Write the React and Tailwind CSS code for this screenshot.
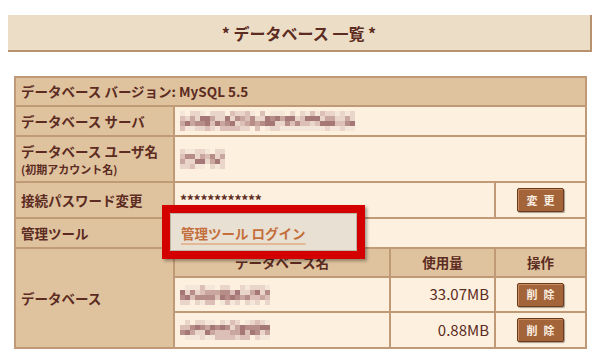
const FONT = { fontFamily: '"Noto Sans CJK JP", "Noto Sans", sans-serif' };

const cell = "border-2 border-[#c09a77] align-middle";
const th = `${cell} bg-[#dfc39e] px-[5px] font-bold`;
const td = `${cell} bg-[#fdf0de] px-[5px]`;

const SHADES = ["#f5e6da", "#ead5ca", "#dcc0b7", "#caa6a0", "#b78d89", "#a57877"];

// pixelated (mosaic) stand-in for the blurred values
function Mosaic({ cols, seed }) {
  const rows = 4;
  const s = 5;
  const rects = [];
  let x = seed * 9301 + 49297;
  for (let r = 0; r < rows; r++) {
    for (let c = 0; c < cols; c++) {
      x = (x * 9301 + 49297) % 233280;
      const v = x / 233280;
      const mid = r === 1 || r === 2;
      let idx = mid ? Math.floor(1 + v * 5) : Math.floor(v * 3);
      if (!mid && v > 0.8) idx = -1;
      if (idx < 0) continue;
      rects.push(<rect key={r + "-" + c} x={c * s} y={r * s} width={s} height={s} fill={SHADES[Math.min(idx, 5)]} />);
    }
  }
  return (
    <svg width={cols * s} height={rows * s} className="block">
      {rects}
    </svg>
  );
}

function BrownButton({ label }) {
  return (
    <button className="w-[47px] h-[24px] rounded-[2px] bg-[#a4643a] border border-[#6b3a1c] shadow-[inset_1px_1px_0_#c98d60,1px_1px_1px_rgba(0,0,0,0.35)] text-[11px] font-bold text-[#fbefe2] tracking-[6px] pl-[6px] leading-none">
      {label}
    </button>
  );
}

export default function App() {
  return (
    <div className="relative w-[600px] h-[361px] bg-white pt-[15px] px-[8px] text-[#5c2b22]" style={FONT}>
      <div className="w-[584px] h-[37px] bg-[#ecdec6] border-r-2 border-b-2 border-[#b8926f] flex items-center justify-center text-[16px] font-bold">
        * データベース 一覧 *
      </div>

      <table className="mt-[24px] ml-[6px] w-[571px] border-collapse border-2 border-[#a77e5b] text-[13.5px] table-fixed">
        <colgroup>
          <col className="w-[159px]" />
          <col className="w-[216px]" />
          <col className="w-[105px]" />
          <col className="w-[91px]" />
        </colgroup>
        <tbody>
          <tr className="h-[29px]">
            <th colSpan={4} className={th + " text-left"}>データベース バージョン: MySQL 5.5</th>
          </tr>
          <tr className="h-[30px]">
            <th className={th + " text-left"}>データベース サーバ</th>
            <td colSpan={3} className={td}>
              <Mosaic cols={35} seed={3} />
            </td>
          </tr>
          <tr className="h-[46px]">
            <th className={th + " text-left"}>
              <div className="leading-[20px]">データベース ユーザ名</div>
              <div className="text-[11px] leading-[16px]">(初期アカウント名)</div>
            </th>
            <td colSpan={3} className={td}>
              <Mosaic cols={9} seed={7} />
            </td>
          </tr>
          <tr className="h-[36px]">
            <th className={th + " text-left"}>接続パスワード変更</th>
            <td colSpan={2} className={td}>
              <span className="text-[14px] font-bold tracking-[-0.3px]">************</span>
            </td>
            <td className={td + " text-center"}>
              <BrownButton label="変更" />
            </td>
          </tr>
          <tr className="h-[30px]">
            <th className={th + " text-left"}>管理ツール</th>
            <td colSpan={3} className={td}>
              <a className="relative z-10 font-bold text-[#c46e3b] underline decoration-[#e4b896] decoration-2 underline-offset-[4px] pl-[1px]">
                管理ツール ログイン
              </a>
            </td>
          </tr>
          <tr className="h-[29px]">
            <th rowSpan={3} className={th + " text-left"}>データベース</th>
            <th className={th + " text-center"}>データベース名</th>
            <th className={th + " text-center"}>使用量</th>
            <th className={th + " text-center"}>操作</th>
          </tr>
          <tr className="h-[35px]">
            <td className={td}>
              <Mosaic cols={18} seed={11} />
            </td>
            <td className={td + " text-right text-[15px]"}>33.07MB</td>
            <td className={td + " text-center"}>
              <BrownButton label="削除" />
            </td>
          </tr>
          <tr className="h-[36px]">
            <td className={td}>
              <Mosaic cols={18} seed={5} />
            </td>
            <td className={td + " text-right text-[15px]"}>0.88MB</td>
            <td className={td + " text-center"}>
              <BrownButton label="削除" />
            </td>
          </tr>
        </tbody>
      </table>

      <div className="absolute left-[162px] top-[205px] w-[203px] h-[54px] border-[8px] border-[#d40000] shadow-[2px_2px_3px_rgba(0,0,0,0.35)] z-0">
        <div className="w-full h-full bg-[#e8e0d3] border border-[#bfb6a9]" />
      </div>
    </div>
  );
}
